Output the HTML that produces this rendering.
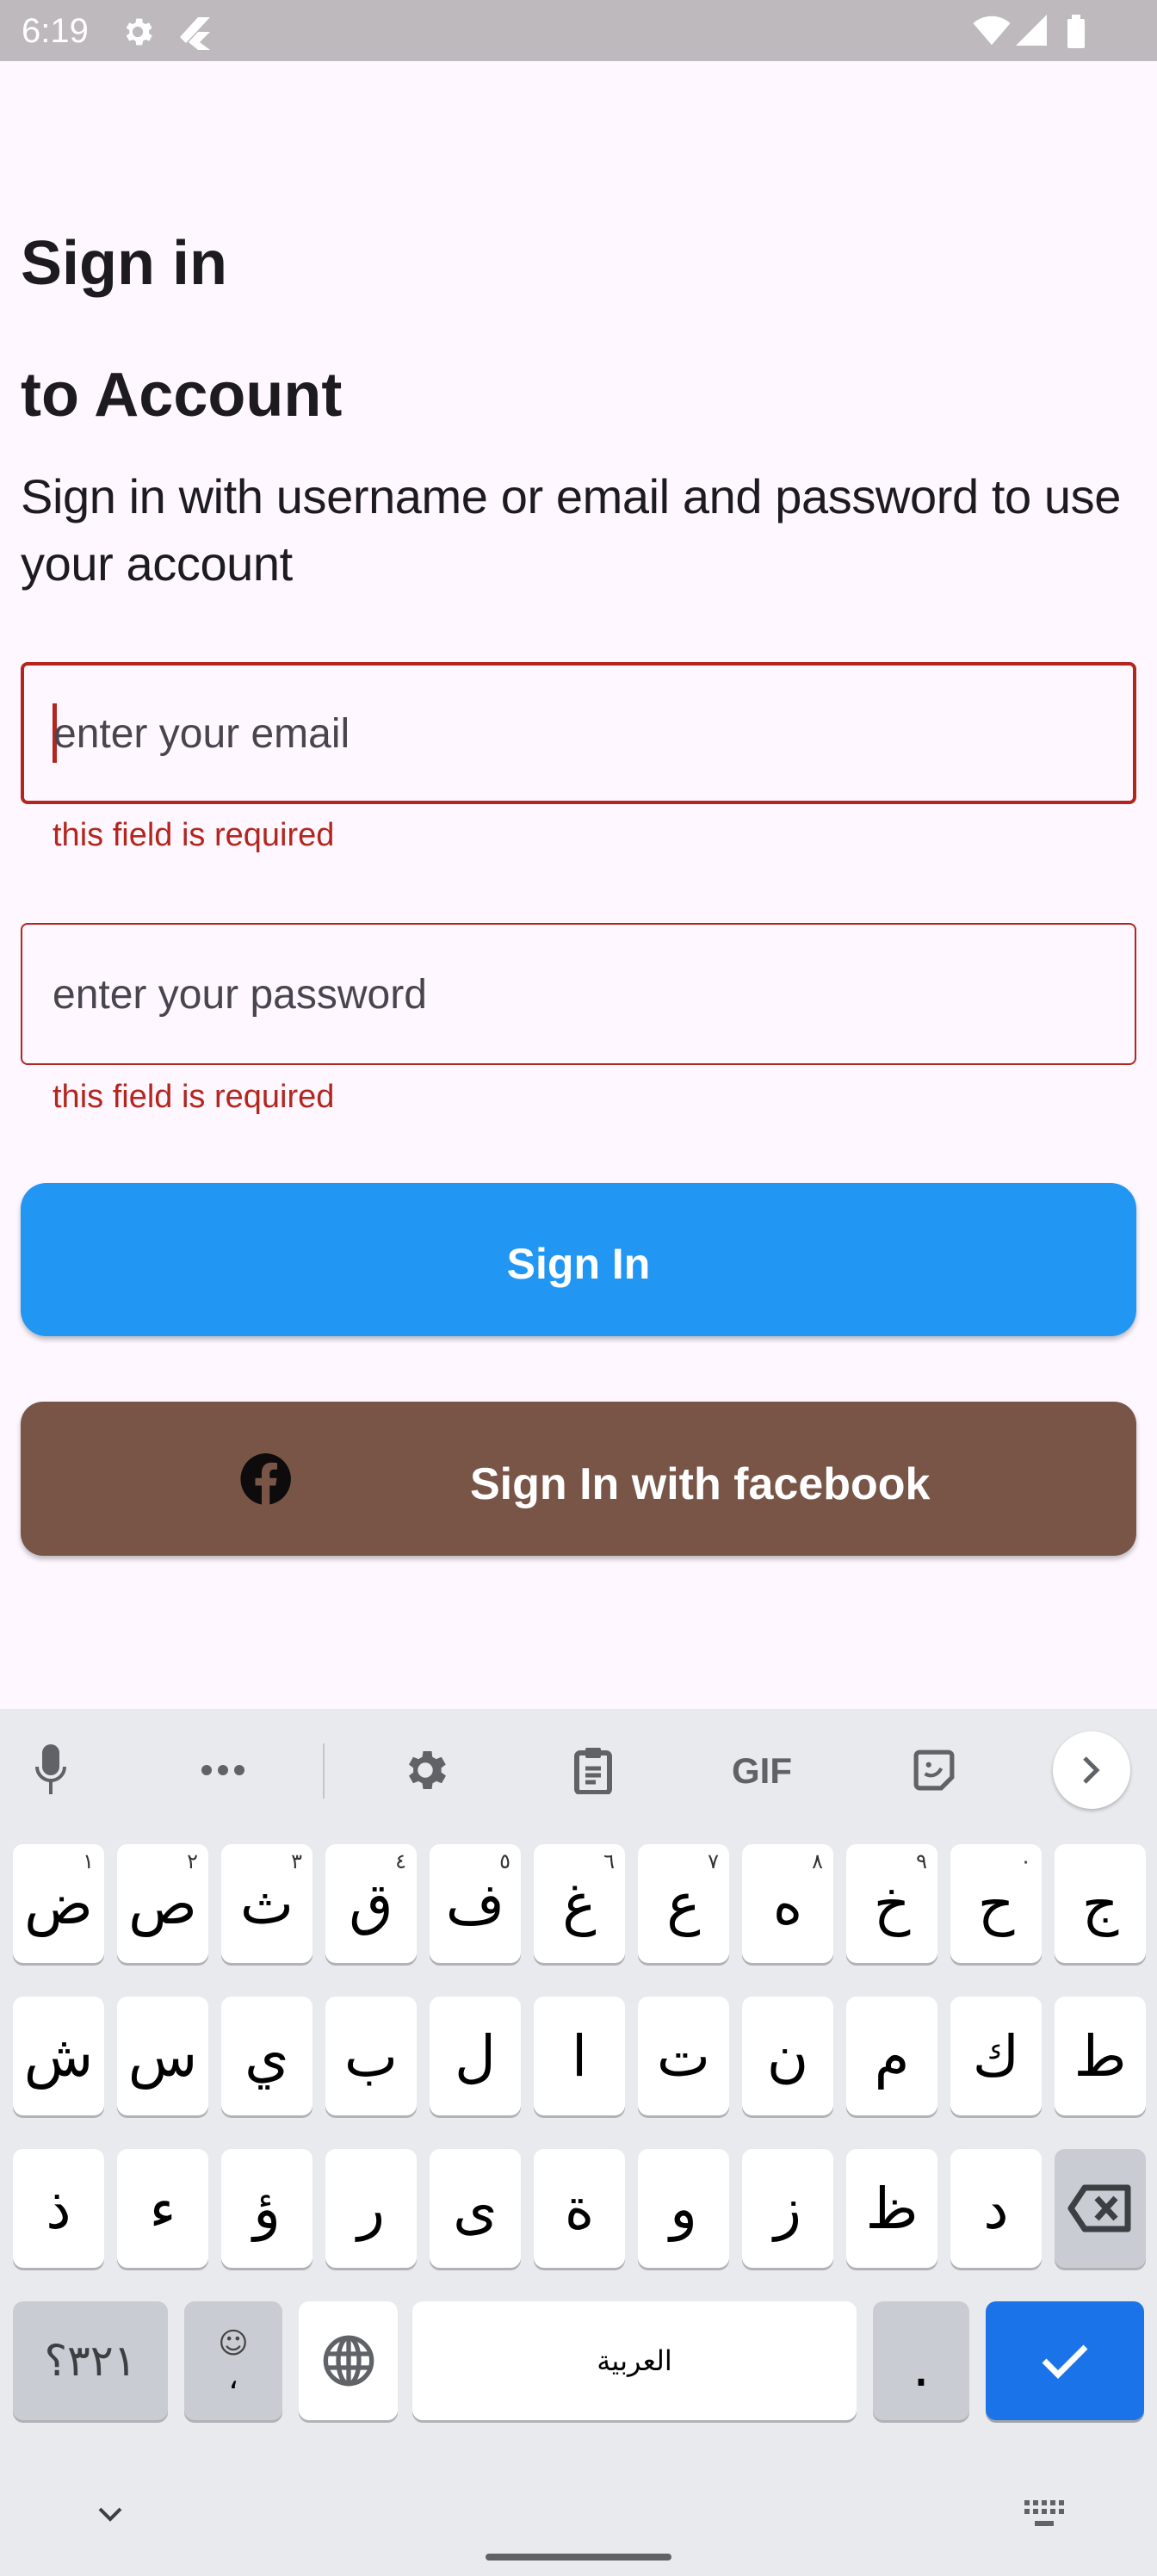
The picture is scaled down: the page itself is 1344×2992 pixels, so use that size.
<!DOCTYPE html>
<html><head><meta charset="utf-8">
<style>
*{margin:0;padding:0;box-sizing:border-box}
html,body{width:1344px;height:2992px;overflow:hidden;background:#fef7ff;font-family:"Liberation Sans",sans-serif}
.a{position:absolute}
.t{position:absolute;white-space:nowrap;line-height:1}
.key{position:absolute;width:106px;height:138px;background:#fff;border-radius:12px;box-shadow:0 3px 0 #b0b2b6;font-family:"DejaVu Sans",sans-serif;font-size:66px;color:#000;display:flex;align-items:center;justify-content:center}
.key .n{position:absolute;right:12px;top:6px;font-size:24px;color:#333}
.g{background:#c9ccd3}
</style></head><body>
<!-- status bar -->
<div class="a" style="left:0;top:0;width:1344px;height:71px;background:#bdb9bd"></div>
<div class="t" style="left:25px;top:16px;font-size:40px;color:#fff">6:19</div>
<svg class="a" style="left:138px;top:16px" width="44" height="42" viewBox="0 0 24 24"><path fill="#fff" d="M19.4 13a7.5 7.5 0 0 0 0-2l2.1-1.6-2-3.5-2.5 1a7 7 0 0 0-1.7-1L15 3.2h-4l-.4 2.7a7 7 0 0 0-1.7 1l-2.5-1-2 3.5L6.5 11a7.5 7.5 0 0 0 0 2l-2.1 1.6 2 3.5 2.5-1a7 7 0 0 0 1.7 1l.4 2.7h4l.4-2.7a7 7 0 0 0 1.7-1l2.5 1 2-3.5zM12 15.5a3.5 3.5 0 1 1 0-7 3.5 3.5 0 0 1 0 7z"/></svg>
<svg class="a" style="left:208px;top:18px" width="36" height="40" viewBox="0 0 36 40"><path fill="#fff" d="M22 2h14L8 32 1 25z M22 19h14L24 31l12 9H22l-11-9z"/></svg>
<svg class="a" style="left:1130px;top:18px" width="44" height="36" viewBox="0 0 24 20"><path fill="#fff" d="M12 19L0 5a18 18 0 0 1 24 0z"/></svg>
<svg class="a" style="left:1180px;top:16px" width="36" height="38" viewBox="0 0 20 20"><path fill="#fff" d="M20 0v20H0z"/></svg>
<div class="a" style="left:1240px;top:22px;width:20px;height:34px;background:#fff;border-radius:2px"></div>
<div class="a" style="left:1245px;top:17px;width:10px;height:6px;background:#fff"></div>

<!-- content -->
<div class="t" style="left:24px;top:270px;font-size:72px;font-weight:bold;color:#1d1b20">Sign in</div>
<div class="t" style="left:24px;top:423px;font-size:72px;font-weight:bold;color:#1d1b20">to Account</div>
<div class="t" style="left:24px;top:549px;font-size:56px;color:#1d1b20;letter-spacing:-0.4px">Sign in with username or email and password to use</div>
<div class="t" style="left:24px;top:627px;font-size:56px;color:#1d1b20;letter-spacing:-0.4px">your account</div>

<div class="a" style="left:24px;top:769px;width:1296px;height:165px;border:4px solid #b3261e;border-radius:8px"></div>
<div class="a" style="left:61px;top:817px;width:5px;height:69px;background:#b3261e"></div>
<div class="t" style="left:62px;top:829px;font-size:48px;color:#49454f">enter your email</div>
<div class="t" style="left:61px;top:951px;font-size:38px;color:#b3261e">this field is required</div>

<div class="a" style="left:24px;top:1072px;width:1296px;height:165px;border:2px solid #b3261e;border-radius:8px"></div>
<div class="t" style="left:61px;top:1132px;font-size:48px;color:#49454f">enter your password</div>
<div class="t" style="left:61px;top:1255px;font-size:38px;color:#b3261e">this field is required</div>

<div class="a" style="left:24px;top:1374px;width:1296px;height:178px;background:#2196f3;border-radius:30px;box-shadow:0 4px 6px rgba(0,0,0,.25)"></div>
<div class="t" style="left:0;width:1344px;text-align:center;top:1443px;font-size:50px;font-weight:bold;color:#fff">Sign In</div>

<div class="a" style="left:24px;top:1628px;width:1296px;height:179px;background:#795548;border-radius:26px;box-shadow:0 4px 6px rgba(0,0,0,.25)"></div>
<svg class="a" style="left:279px;top:1688px" width="60" height="60" viewBox="0 0 24 24"><path fill="#0d0b0b" d="M12 0a12 12 0 0 0-2 23.8V15H7v-3.5h3V9c0-3 1.8-4.7 4.5-4.7 1.3 0 2.7.2 2.7.2v3h-1.5c-1.5 0-2 .9-2 1.9v2.1h3.3l-.5 3.5h-2.8v8.8A12 12 0 0 0 12 0z"/></svg>
<div class="t" style="left:546px;top:1698px;font-size:52px;font-weight:bold;color:#fff">Sign In with facebook</div>

<!-- keyboard -->
<div class="a" style="left:0;top:1985px;width:1344px;height:1007px;background:#e8eaed"></div>
<svg class="a" style="left:39px;top:2026px" width="40" height="60" viewBox="0 0 20 30"><rect x="5" y="0" width="10" height="18" rx="5" fill="#5f6368"/><path d="M2 13a8 8 0 0 0 16 0" stroke="#5f6368" stroke-width="2" fill="none"/><path d="M10 21v8" stroke="#5f6368" stroke-width="2"/></svg>
<svg class="a" style="left:232px;top:2046px" width="54" height="20"><circle cx="8" cy="10" r="6" fill="#5f6368"/><circle cx="27" cy="10" r="6" fill="#5f6368"/><circle cx="46" cy="10" r="6" fill="#5f6368"/></svg>
<div class="a" style="left:375px;top:2025px;width:2px;height:64px;background:#c3c5c9"></div>
<svg class="a" style="left:464px;top:2026px" width="60" height="60" viewBox="0 0 24 24"><path fill="#5f6368" d="M19.4 13a7.5 7.5 0 0 0 0-2l2.1-1.6-2-3.5-2.5 1a7 7 0 0 0-1.7-1L15 3.2h-4l-.4 2.7a7 7 0 0 0-1.7 1l-2.5-1-2 3.5L6.5 11a7.5 7.5 0 0 0 0 2l-2.1 1.6 2 3.5 2.5-1a7 7 0 0 0 1.7 1l.4 2.7h4l.4-2.7a7 7 0 0 0 1.7-1l2.5 1 2-3.5zM12 15.5a3.5 3.5 0 1 1 0-7 3.5 3.5 0 0 1 0 7z"/></svg>
<svg class="a" style="left:666px;top:2028px" width="46" height="56" viewBox="0 0 23 28"><rect x="2" y="4" width="19" height="23" rx="2" fill="none" stroke="#5f6368" stroke-width="3"/><rect x="7" y="1" width="9" height="6" rx="1" fill="#5f6368"/><path d="M7 13h9M7 17h9M7 21h6" stroke="#5f6368" stroke-width="2.5"/></svg>
<div class="t" style="left:850px;top:2036px;font-size:42px;font-weight:bold;color:#5f6368;letter-spacing:0px">GIF</div>
<svg class="a" style="left:1060px;top:2030px" width="50" height="52" viewBox="0 0 24 24"><path d="M4 2h16a2 2 0 0 1 2 2v12l-6 6H4a2 2 0 0 1-2-2V4a2 2 0 0 1 2-2z" fill="none" stroke="#5f6368" stroke-width="2.5"/><circle cx="9" cy="9" r="1.5" fill="#5f6368"/><path d="M7 14c3 2 7 1 9-3" stroke="#5f6368" stroke-width="2" fill="none"/></svg>
<div class="a" style="left:1223px;top:2011px;width:90px;height:90px;border-radius:50%;background:#fff;box-shadow:0 2px 4px rgba(0,0,0,.25)"></div>
<svg class="a" style="left:1256px;top:2038px" width="24" height="36" viewBox="0 0 12 18"><path d="M2 2l7 7-7 7" stroke="#5f6368" stroke-width="2.5" fill="none"/></svg>

<!-- row1 -->
<div class="key" style="left:15px;top:2142px">ض<span class="n">١</span></div>
<div class="key" style="left:136px;top:2142px">ص<span class="n">٢</span></div>
<div class="key" style="left:257px;top:2142px">ث<span class="n">٣</span></div>
<div class="key" style="left:378px;top:2142px">ق<span class="n">٤</span></div>
<div class="key" style="left:499px;top:2142px">ف<span class="n">٥</span></div>
<div class="key" style="left:620px;top:2142px">غ<span class="n">٦</span></div>
<div class="key" style="left:741px;top:2142px">ع<span class="n">٧</span></div>
<div class="key" style="left:862px;top:2142px">ه<span class="n">٨</span></div>
<div class="key" style="left:983px;top:2142px">خ<span class="n">٩</span></div>
<div class="key" style="left:1104px;top:2142px">ح<span class="n">٠</span></div>
<div class="key" style="left:1225px;top:2142px">ج</div>
<!-- row2 -->
<div class="key" style="left:15px;top:2319px">ش</div>
<div class="key" style="left:136px;top:2319px">س</div>
<div class="key" style="left:257px;top:2319px">ي</div>
<div class="key" style="left:378px;top:2319px">ب</div>
<div class="key" style="left:499px;top:2319px">ل</div>
<div class="key" style="left:620px;top:2319px">ا</div>
<div class="key" style="left:741px;top:2319px">ت</div>
<div class="key" style="left:862px;top:2319px">ن</div>
<div class="key" style="left:983px;top:2319px">م</div>
<div class="key" style="left:1104px;top:2319px">ك</div>
<div class="key" style="left:1225px;top:2319px">ط</div>
<!-- row3 -->
<div class="key" style="left:15px;top:2496px">ذ</div>
<div class="key" style="left:136px;top:2496px">ء</div>
<div class="key" style="left:257px;top:2496px">ؤ</div>
<div class="key" style="left:378px;top:2496px">ر</div>
<div class="key" style="left:499px;top:2496px">ى</div>
<div class="key" style="left:620px;top:2496px">ة</div>
<div class="key" style="left:741px;top:2496px">و</div>
<div class="key" style="left:862px;top:2496px">ز</div>
<div class="key" style="left:983px;top:2496px">ظ</div>
<div class="key" style="left:1104px;top:2496px">د</div>
<div class="key g" style="left:1225px;top:2496px"><svg width="76" height="56" viewBox="0 0 38 28"><path d="M10 2h25v24H10L2 14z" fill="none" stroke="#3c4043" stroke-width="3.5" stroke-linejoin="round"/><path d="M17 8l11 12M28 8L17 20" stroke="#3c4043" stroke-width="3.5"/></svg></div>
<!-- row4 -->
<div class="key g" style="left:15px;top:2673px;width:180px;font-size:50px;color:#3c4043"><span style="direction:ltr;unicode-bidi:bidi-override">؟٣٢١</span></div>
<div class="key g" style="left:214px;top:2673px;width:114px;flex-direction:column;font-size:36px"><span style="font-size:34px;color:#444">☺</span><span>،</span></div>
<div class="key" style="left:347px;top:2673px;width:115px"><svg width="64" height="64" viewBox="0 0 24 24"><circle cx="12" cy="12" r="10" fill="none" stroke="#5f6368" stroke-width="2"/><ellipse cx="12" cy="12" rx="4.5" ry="10" fill="none" stroke="#5f6368" stroke-width="2"/><path d="M2 9h20M2 15h20M12 2v20" stroke="#5f6368" stroke-width="2"/></svg></div>
<div class="key" style="left:479px;top:2673px;width:516px;font-size:32px">العربية</div>
<div class="key g" style="left:1014px;top:2673px;width:112px;align-items:flex-end;padding-bottom:24px">.</div>
<div class="key" style="left:1145px;top:2673px;width:184px;background:#1a73e8;box-shadow:0 3px 0 #a0a4aa"><svg width="60" height="44" viewBox="0 0 30 22"><path d="M3 11l8 8L27 3" stroke="#fff" stroke-width="3.5" fill="none"/></svg></div>

<svg class="a" style="left:112px;top:2910px" width="32" height="22" viewBox="0 0 16 11"><path d="M2 2l6 6 6-6" stroke="#3c4043" stroke-width="2" fill="none"/></svg>
<svg class="a" style="left:1190px;top:2904px" width="48" height="34" viewBox="0 0 24 17"><g fill="#5f6368"><rect x="0" y="0" width="3" height="3"/><rect x="5" y="0" width="3" height="3"/><rect x="10" y="0" width="3" height="3"/><rect x="15" y="0" width="3" height="3"/><rect x="20" y="0" width="3" height="3"/><rect x="0" y="5" width="3" height="3"/><rect x="5" y="5" width="3" height="3"/><rect x="10" y="5" width="3" height="3"/><rect x="15" y="5" width="3" height="3"/><rect x="20" y="5" width="3" height="3"/><rect x="6" y="12" width="11" height="3"/></g></svg>
<div class="a" style="left:564px;top:2966px;width:216px;height:8px;border-radius:4px;background:#5f6368"></div>
</body></html>
